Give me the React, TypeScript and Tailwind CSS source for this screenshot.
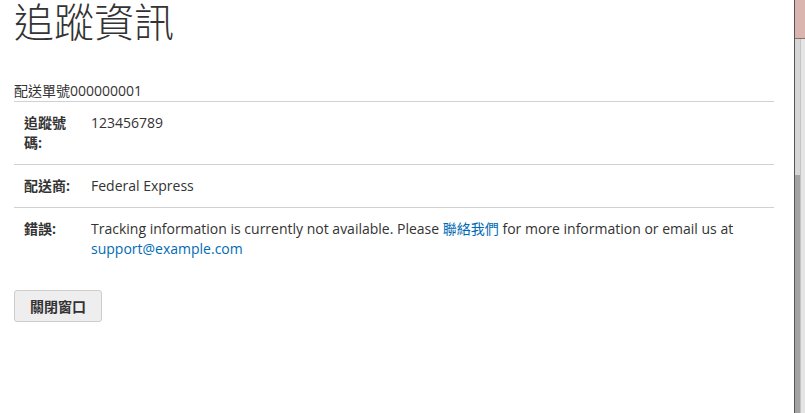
import React from 'react';

const font = { fontFamily: '"Open Sans", "Noto Sans CJK TC", sans-serif' };

interface RowProps {
  label: string;
  children: React.ReactNode;
  last?: boolean;
}

const Row: React.FC<RowProps> = ({ label, children, last }) => (
  <div className={`flex ${last ? '' : 'border-b border-[#d1d1d1]'}`}>
    <div className="w-[67px] shrink-0 px-[10px] py-[11px] font-bold text-[14px] leading-[20px] text-[#333]">
      {label}
    </div>
    <div className="flex-1 px-[10px] py-[11px] text-[14px] leading-[20px] text-[#333]">
      {children}
    </div>
  </div>
);

export default function App() {
  return (
    <div className="flex w-[805px] h-[413px] bg-white overflow-hidden" style={font}>
      <div className="w-[780px] pl-[14px] pr-[6px]">
        <h1 className="text-[40px] font-light leading-[44px] text-[#333]">追蹤資訊</h1>
        <div className="mt-[37px] border-b border-[#d1d1d1] text-[14px] leading-[20px] text-[#333]">
          配送單號000000001
        </div>
        <Row label="追蹤號碼:">123456789</Row>
        <Row label="配送商:">Federal Express</Row>
        <Row label="錯誤:" last>
          Tracking information is currently not available. Please{' '}
          <a className="text-[#006bb4]">聯絡我們</a> for more information or email us at{' '}
          <a className="text-[#006bb4]">support@example.com</a>
        </Row>
        <button className="mt-[20px] h-[32px] w-[88px] rounded-[3px] border border-[#cdcdcd] bg-[#eeeeee] text-[14px] font-bold text-[#333]">
          關閉窗口
        </button>
      </div>
      <div className="w-[14px]" />
      <div className="flex flex-col w-[11px] border-l border-[#555]">
        <div className="h-[39px] bg-[#dab5af] border-b border-[#8a6f6a]" />
        <div className="flex flex-1">
          <div className="flex flex-col w-[5px]">
            <div className="h-[136px] bg-[#d6d6d6]" />
            <div className="flex-1 bg-[#a3a3a3]" />
          </div>
          <div className="w-[1px] bg-[#c4c4c4]" />
          <div className="flex-1 bg-[#e4e4e4]" />
        </div>
      </div>
    </div>
  );
}
